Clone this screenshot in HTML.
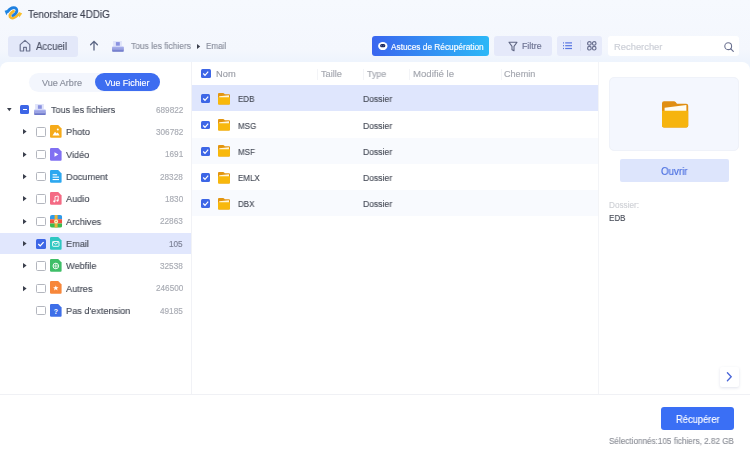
<!DOCTYPE html>
<html><head><meta charset="utf-8">
<style>
*{box-sizing:border-box;margin:0;padding:0}
html,body{width:750px;height:457px;overflow:hidden}
body{background:linear-gradient(180deg,#f6f9fe 0px,#f4f7fd 50px,#eef4fd 61px);font-family:"Liberation Sans",sans-serif;color:#333;position:relative}
.abs{position:absolute}
.t{position:absolute;white-space:nowrap;line-height:1;-webkit-text-stroke:0.15px currentColor;will-change:transform}
svg{position:absolute;overflow:visible}
</style></head><body>
<svg style="left:0px;top:0px" width="26" height="24" viewBox="0 0 26 24">
  <path d="M13.6 11.2 C11.8 12.4 10 13.6 9.8 15.6 C9.7 17.6 11.6 18.4 13.4 18 C15.4 17.5 17 16 18.6 14.4" stroke="#f7b82a" stroke-width="2.7" fill="none" stroke-linecap="round"/>
  <path d="M18.6 11.8 L22.2 13.6 L19.2 17.4 Z" fill="#f9bf2c"/>
  <path d="M7.6 11.6 C9.2 9.4 11.4 7.8 13.6 7.7 C15.8 7.6 17 8.8 16.9 10.6 C16.8 12.6 14.8 14.4 12.8 15.6" stroke="#1f80e0" stroke-width="2.7" fill="none" stroke-linecap="round"/>
  <path d="M4.6 10.8 L9.6 9.4 L6.4 15.2 Z" fill="#1f86e2"/>
</svg>
<div class="t" style="left:27.60px;top:9.50px;font-size:10.4px;color:#3d4150;transform:scaleX(0.95);transform-origin:left top;">Tenorshare 4DDiG</div>
<div class="abs" style="left:8px;top:35.5px;width:70px;height:21px;background:#e3e8f9;border-radius:3px"></div>
<svg style="left:19px;top:39px" width="12" height="13" viewBox="0 0 12 13"><path d="M1.2 5.6 L6 1.4 L10.8 5.6 V11.4 Q10.8 12 10.2 12 H7.4 V8.4 H4.6 V12 H1.8 Q1.2 12 1.2 11.4 Z" fill="none" stroke="#6d7490" stroke-width="1.2" stroke-linejoin="round"/></svg>
<div class="t" style="left:36.00px;top:42.48px;font-size:10.3px;color:#4d5266;transform:scaleX(0.934);transform-origin:left top;">Accueil</div>
<svg style="left:89px;top:40px" width="10" height="11" viewBox="0 0 10 11"><path d="M5 10 V1.6 M1.6 4.8 L5 1.4 L8.4 4.8" fill="none" stroke="#5b6684" stroke-width="1.3" stroke-linecap="round"/></svg>
<svg style="left:111.6px;top:40.6px" width="12" height="11" viewBox="0 0 12 11">
<defs><linearGradient id="dg1" x1="0" y1="0" x2="0" y2="1"><stop offset="0" stop-color="#b3baf3"/><stop offset="1" stop-color="#6570c4"/></linearGradient></defs>
<rect x="1.1" y="0" width="8.8" height="5.2" fill="#e0e4fa"/>
<rect x="3.9" y="1.1" width="3.9" height="3.6" fill="#8a92e0"/>
<rect x="0.1" y="5.4" width="11.7" height="5.4" rx="0.8" fill="url(#dg1)"/>
<rect x="1" y="7.6" width="10" height="0.9" fill="#c9cff6" opacity="0.4"/>
</svg>
<div class="t" style="left:130.80px;top:42.13px;font-size:9.3px;color:#8a8f9d;transform:scaleX(0.906);transform-origin:left top;">Tous les fichiers</div>
<svg style="left:197px;top:43.7px" width="4" height="5" viewBox="0 0 4 5"><path d="M0 0 L3.2 2.5 L0 5 Z" fill="#3a3f4c"/></svg>
<div class="t" style="left:206.20px;top:42.13px;font-size:9.3px;color:#8a8f9d;transform:scaleX(0.87);transform-origin:left top;">Email</div>
<div class="abs" style="left:372px;top:35.5px;width:117px;height:20.5px;background:linear-gradient(90deg,#3a66ef 0%,#2cb8f7 100%);border-radius:3px"></div>
<svg style="left:377.7px;top:41.8px" width="10" height="9" viewBox="0 0 10 9"><ellipse cx="4.8" cy="4.05" rx="4.7" ry="4.05" fill="#fff"/><rect x="2.1" y="2.1" width="5.2" height="3.2" rx="1.5" fill="#1e2a5e"/><circle cx="3.6" cy="3.7" r="0.45" fill="#8fa0e0"/><circle cx="5.8" cy="3.7" r="0.45" fill="#8fa0e0"/></svg>
<div class="t" style="left:390.70px;top:42.57px;font-size:8.3px;color:#ffffff;">Astuces de Récupération</div>
<div class="abs" style="left:494px;top:35.5px;width:57.5px;height:20.7px;background:#e5e9fa;border-radius:3px"></div>
<svg style="left:507.5px;top:40.5px" width="10" height="11" viewBox="0 0 10 11"><path d="M1 1.2 H9 L6 5.4 V9.8 L4 8.8 V5.4 Z" fill="none" stroke="#5f6683" stroke-width="1.1" stroke-linejoin="round"/></svg>
<div class="t" style="left:522.00px;top:42.15px;font-size:8.8px;color:#6a7090;">Filtre</div>
<div class="abs" style="left:557px;top:35.7px;width:45px;height:20.5px;background:#e6eafa;border-radius:3px"></div>
<svg style="left:563px;top:42.2px" width="10" height="8" viewBox="0 0 10 8"><g fill="#5775e2"><rect x="0" y="0.3" width="1" height="1.2"/><rect x="2.2" y="0.3" width="6.8" height="1.2"/><rect x="0" y="3.1" width="1" height="1.2"/><rect x="2.2" y="3.1" width="6.8" height="1.2"/><rect x="0" y="5.9" width="1" height="1.2"/><rect x="2.2" y="5.9" width="6.8" height="1.2"/></g></svg>
<div class="abs" style="left:579.5px;top:40.2px;width:1px;height:11px;background:#d8ddf0;"></div>
<svg style="left:587px;top:41px" width="10" height="10" viewBox="0 0 10 10"><g fill="none" stroke="#6a7090" stroke-width="1.2"><circle cx="2.4" cy="2.4" r="1.8"/><circle cx="7.2" cy="2.4" r="1.8"/><circle cx="2.4" cy="7.2" r="1.8"/><circle cx="7.2" cy="7.2" r="1.8"/></g></svg>
<div class="abs" style="left:607.8px;top:36px;width:131.2px;height:20px;background:#ffffff;border-radius:3px"></div>
<div class="t" style="left:613.50px;top:41.84px;font-size:9.4px;color:#cbced6;">Rechercher</div>
<svg style="left:723.8px;top:41.5px" width="10" height="10" viewBox="0 0 10 10"><circle cx="4.2" cy="4.2" r="3.4" fill="none" stroke="#6b7190" stroke-width="1.1"/><path d="M6.8 6.8 L9.3 9.3" stroke="#6b7190" stroke-width="1.2" stroke-linecap="round"/></svg>
<div class="abs" style="left:0px;top:62px;width:750px;height:333px;background:#ffffff;border-radius:8px 8px 0 0"></div>
<div class="abs" style="left:191px;top:62px;width:1px;height:332px;background:#f1f2f6;"></div>
<div class="abs" style="left:597.5px;top:62px;width:1px;height:332px;background:#f3f4f7;"></div>
<div class="abs" style="left:0px;top:394px;width:750px;height:1px;background:#f0f1f5;"></div>
<div class="abs" style="left:28.5px;top:72.5px;width:131.5px;height:19px;background:#f3f6fd;border-radius:9.5px"></div>
<div class="abs" style="left:94.7px;top:72.8px;width:65.3px;height:18.4px;background:#3d6df0;border-radius:9.2px"></div>
<div class="t" style="left:41.60px;top:78.52px;font-size:9.07px;color:#8a8f9d;">Vue Arbre</div>
<div class="t" style="left:104.80px;top:78.70px;font-size:8.86px;color:#ffffff;">Vue Fichier</div>
<svg style="left:6.7px;top:107.60px" width="5" height="4" viewBox="0 0 5 4"><path d="M0 0 H4.6 L2.3 3.2 Z" fill="#3a3f4c"/></svg>
<div class="abs" style="left:20.3px;top:105.0px;width:9px;height:9px;background:#3d66e6;border-radius:1.5px"></div>
<div class="abs" style="left:22.6px;top:109.0px;width:4.4px;height:1.3px;background:#ffffff;"></div>
<svg style="left:34px;top:103.8px" width="12" height="11.5" viewBox="0 0 12 11.5">
<defs><linearGradient id="dg2" x1="0" y1="0" x2="0" y2="1"><stop offset="0" stop-color="#b3baf3"/><stop offset="1" stop-color="#6570c4"/></linearGradient></defs>
<rect x="1.1" y="0" width="8.8" height="5.4" fill="#e0e4fa"/>
<rect x="3.9" y="1.2" width="3.9" height="3.6" fill="#8a92e0"/>
<rect x="0.1" y="5.6" width="11.7" height="5.5" rx="0.8" fill="url(#dg2)"/>
<rect x="1" y="7.9" width="10" height="0.9" fill="#c9cff6" opacity="0.4"/>
</svg>
<div class="t" style="left:51.00px;top:104.87px;font-size:9.6px;color:#484d59;transform:scaleX(0.94);transform-origin:left top;">Tous les fichiers</div>
<div class="t" style="right:567.00px;top:106.66px;font-size:8.2px;color:#a9acb4;">689822</div>
<svg style="left:22.7px;top:129.32px" width="4" height="6" viewBox="0 0 4 6"><path d="M0 0 L3.6 2.6 L0 5.2 Z" fill="#3a3f4c"/></svg>
<div class="abs" style="left:36px;top:127.42px;width:9.5px;height:9.2px;background:transparent;border:1px solid #b3b6be;border-radius:1.5px"></div>
<svg style="left:50px;top:125.22px" width="12" height="13" viewBox="0 0 12 13">
<path d="M1.2 0 H8.2 L11.6 3.4 V11.7 Q11.6 12.7 10.6 12.7 H1.2 Q0 12.7 0 11.7 V1 Q0 0 1.2 0 Z" fill="#f6ab1a"/>

<path d="M2.5 10.5 L5 6.8 L6.6 8.6 L7.8 7.4 L9.6 10.5 Z" fill="#fff"/><circle cx="7.8" cy="4.6" r="1" fill="#fff"/></svg>
<div class="t" style="left:66.40px;top:127.39px;font-size:9.6px;color:#484d59;transform:scaleX(0.955);transform-origin:left top;">Photo</div>
<div class="t" style="right:567.00px;top:128.98px;font-size:8.2px;color:#a9acb4;">306782</div>
<svg style="left:22.7px;top:151.64px" width="4" height="6" viewBox="0 0 4 6"><path d="M0 0 L3.6 2.6 L0 5.2 Z" fill="#3a3f4c"/></svg>
<div class="abs" style="left:36px;top:149.74px;width:9.5px;height:9.2px;background:transparent;border:1px solid #b3b6be;border-radius:1.5px"></div>
<svg style="left:50px;top:147.54px" width="12" height="13" viewBox="0 0 12 13">
<path d="M1.2 0 H8.2 L11.6 3.4 V11.7 Q11.6 12.7 10.6 12.7 H1.2 Q0 12.7 0 11.7 V1 Q0 0 1.2 0 Z" fill="#8070f2"/>

<path d="M4.5 4.3 L8.3 6.5 L4.5 8.7 Z" fill="#fff"/></svg>
<div class="t" style="left:66.40px;top:149.71px;font-size:9.6px;color:#484d59;transform:scaleX(0.955);transform-origin:left top;">Vidéo</div>
<div class="t" style="right:567.00px;top:151.30px;font-size:8.2px;color:#a9acb4;">1691</div>
<svg style="left:22.7px;top:173.96px" width="4" height="6" viewBox="0 0 4 6"><path d="M0 0 L3.6 2.6 L0 5.2 Z" fill="#3a3f4c"/></svg>
<div class="abs" style="left:36px;top:172.06px;width:9.5px;height:9.2px;background:transparent;border:1px solid #b3b6be;border-radius:1.5px"></div>
<svg style="left:50px;top:169.86px" width="12" height="13" viewBox="0 0 12 13">
<path d="M1.2 0 H8.2 L11.6 3.4 V11.7 Q11.6 12.7 10.6 12.7 H1.2 Q0 12.7 0 11.7 V1 Q0 0 1.2 0 Z" fill="#2da8f0"/>

<rect x="2.6" y="4.2" width="4.5" height="1.1" fill="#fff"/><rect x="2.6" y="6.6" width="6.4" height="1.1" fill="#fff"/><rect x="2.6" y="9" width="6.4" height="1.1" fill="#fff"/></svg>
<div class="t" style="left:66.40px;top:172.03px;font-size:9.6px;color:#484d59;transform:scaleX(0.955);transform-origin:left top;">Document</div>
<div class="t" style="right:567.00px;top:173.62px;font-size:8.2px;color:#a9acb4;">28328</div>
<svg style="left:22.7px;top:196.28px" width="4" height="6" viewBox="0 0 4 6"><path d="M0 0 L3.6 2.6 L0 5.2 Z" fill="#3a3f4c"/></svg>
<div class="abs" style="left:36px;top:194.38px;width:9.5px;height:9.2px;background:transparent;border:1px solid #b3b6be;border-radius:1.5px"></div>
<svg style="left:50px;top:192.18px" width="12" height="13" viewBox="0 0 12 13">
<path d="M1.2 0 H8.2 L11.6 3.4 V11.7 Q11.6 12.7 10.6 12.7 H1.2 Q0 12.7 0 11.7 V1 Q0 0 1.2 0 Z" fill="#f46a84"/>

<path d="M5 9.2 V4.6 L8.2 4 V8.4" fill="none" stroke="#fff" stroke-width="0.9"/><circle cx="4.3" cy="9.3" r="1.1" fill="#fff"/><circle cx="7.5" cy="8.6" r="1.1" fill="#fff"/></svg>
<div class="t" style="left:66.40px;top:194.35px;font-size:9.6px;color:#484d59;transform:scaleX(0.955);transform-origin:left top;">Audio</div>
<div class="t" style="right:567.00px;top:195.94px;font-size:8.2px;color:#a9acb4;">1830</div>
<svg style="left:22.7px;top:218.60px" width="4" height="6" viewBox="0 0 4 6"><path d="M0 0 L3.6 2.6 L0 5.2 Z" fill="#3a3f4c"/></svg>
<div class="abs" style="left:36px;top:216.7px;width:9.5px;height:9.2px;background:transparent;border:1px solid #b3b6be;border-radius:1.5px"></div>
<svg style="left:49.8px;top:215.00px" width="12.2" height="12.7" viewBox="0 0 12.2 12.7">
<defs><clipPath id="ac"><rect x="0" y="0" width="12.2" height="12.7" rx="2"/></clipPath></defs>
<g clip-path="url(#ac)"><rect x="0" y="0" width="12.2" height="4.3" fill="#2f9ae8"/><rect x="0" y="4.3" width="12.2" height="4.2" fill="#f0533f"/><rect x="0" y="8.5" width="12.2" height="4.2" fill="#3dba4e"/><rect x="4.6" y="0" width="3" height="12.7" fill="#e9b53a"/></g>
<circle cx="6.1" cy="6.4" r="2" fill="#fbeec4"/><circle cx="6.1" cy="6.4" r="0.7" fill="#c9a040"/>
</svg>
<div class="t" style="left:66.40px;top:216.67px;font-size:9.6px;color:#484d59;transform:scaleX(0.955);transform-origin:left top;">Archives</div>
<div class="t" style="right:567.00px;top:218.26px;font-size:8.2px;color:#a9acb4;">22863</div>
<div class="abs" style="left:0px;top:232.7px;width:191px;height:21.7px;background:#e1e7fd;"></div>
<svg style="left:22.7px;top:240.92px" width="4" height="6" viewBox="0 0 4 6"><path d="M0 0 L3.6 2.6 L0 5.2 Z" fill="#3a3f4c"/></svg>
<div class="abs" style="left:36px;top:239.02px;width:9.5px;height:9.5px;background:#3d66e6;border-radius:1.5px"></div>
<svg style="left:36px;top:239.02px" width="10" height="10" viewBox="0 0 10 10"><path d="M2.3 5 L4.2 6.9 L7.6 3.1" fill="none" stroke="#fff" stroke-width="1.3"/></svg>
<svg style="left:50px;top:236.82px" width="12" height="13" viewBox="0 0 12 13">
<path d="M1.2 0 H8.2 L11.6 3.4 V11.7 Q11.6 12.7 10.6 12.7 H1.2 Q0 12.7 0 11.7 V1 Q0 0 1.2 0 Z" fill="#2fc7c1"/>

<rect x="2.6" y="4.5" width="6.4" height="4.8" rx="0.6" fill="none" stroke="#fff" stroke-width="0.9"/><path d="M2.8 5 L5.8 7.2 L8.8 5" fill="none" stroke="#fff" stroke-width="0.9"/></svg>
<div class="t" style="left:66.40px;top:238.99px;font-size:9.6px;color:#484d59;transform:scaleX(0.955);transform-origin:left top;">Email</div>
<div class="t" style="right:567.00px;top:240.58px;font-size:8.2px;color:#7d8296;">105</div>
<svg style="left:22.7px;top:263.24px" width="4" height="6" viewBox="0 0 4 6"><path d="M0 0 L3.6 2.6 L0 5.2 Z" fill="#3a3f4c"/></svg>
<div class="abs" style="left:36px;top:261.34px;width:9.5px;height:9.2px;background:transparent;border:1px solid #b3b6be;border-radius:1.5px"></div>
<svg style="left:50px;top:259.14px" width="12" height="13" viewBox="0 0 12 13">
<path d="M1.2 0 H8.2 L11.6 3.4 V11.7 Q11.6 12.7 10.6 12.7 H1.2 Q0 12.7 0 11.7 V1 Q0 0 1.2 0 Z" fill="#3fbe68"/>

<circle cx="5.8" cy="7" r="2.8" fill="none" stroke="#fff" stroke-width="0.9"/><path d="M3 7 H8.6 M5.8 4.2 V9.8" stroke="#fff" stroke-width="0.7"/></svg>
<div class="t" style="left:66.40px;top:261.31px;font-size:9.6px;color:#484d59;transform:scaleX(0.955);transform-origin:left top;">Webfile</div>
<div class="t" style="right:567.00px;top:262.90px;font-size:8.2px;color:#a9acb4;">32538</div>
<svg style="left:22.7px;top:285.56px" width="4" height="6" viewBox="0 0 4 6"><path d="M0 0 L3.6 2.6 L0 5.2 Z" fill="#3a3f4c"/></svg>
<div class="abs" style="left:36px;top:283.66px;width:9.5px;height:9.2px;background:transparent;border:1px solid #b3b6be;border-radius:1.5px"></div>
<svg style="left:50px;top:281.46px" width="12" height="13" viewBox="0 0 12 13">
<path d="M1.2 0 H8.2 L11.6 3.4 V11.7 Q11.6 12.7 10.6 12.7 H1.2 Q0 12.7 0 11.7 V1 Q0 0 1.2 0 Z" fill="#f7873a"/>

<path d="M5.8 4.4 L6.6 6.2 L8.5 6.3 L7 7.5 L7.5 9.4 L5.8 8.3 L4.1 9.4 L4.6 7.5 L3.1 6.3 L5 6.2 Z" fill="#fff"/></svg>
<div class="t" style="left:66.40px;top:283.63px;font-size:9.6px;color:#484d59;transform:scaleX(0.955);transform-origin:left top;">Autres</div>
<div class="t" style="right:567.00px;top:285.22px;font-size:8.2px;color:#a9acb4;">246500</div>
<div class="abs" style="left:36px;top:305.98px;width:9.5px;height:9.2px;background:transparent;border:1px solid #b3b6be;border-radius:1.5px"></div>
<svg style="left:50px;top:303.78px" width="12" height="13" viewBox="0 0 12 13">
<path d="M1.2 0 H8.2 L11.6 3.4 V11.7 Q11.6 12.7 10.6 12.7 H1.2 Q0 12.7 0 11.7 V1 Q0 0 1.2 0 Z" fill="#3e6fe8"/>

<text x="5.8" y="9.6" font-size="7" font-weight="bold" fill="#fff" text-anchor="middle" font-family="Liberation Sans">?</text></svg>
<div class="t" style="left:66.40px;top:305.95px;font-size:9.6px;color:#484d59;transform:scaleX(0.955);transform-origin:left top;">Pas d'extension</div>
<div class="t" style="right:567.00px;top:307.54px;font-size:8.2px;color:#a9acb4;">49185</div>
<div class="abs" style="left:201.3px;top:69.1px;width:9.3px;height:8.8px;background:#3d66e6;border-radius:1.5px"></div>
<svg style="left:201.3px;top:69.1px" width="9.3" height="8.8" viewBox="0 0 9.3 8.8"><path d="M2.2 4.5 L4 6.3 L7.2 2.7" fill="none" stroke="#fff" stroke-width="1.2"/></svg>
<div class="t" style="left:216.30px;top:69.73px;font-size:9.3px;color:#9a9da6;">Nom</div>
<div class="abs" style="left:317px;top:68.5px;width:1px;height:11px;background:#f3f4f7;"></div>
<div class="abs" style="left:363px;top:68.5px;width:1px;height:11px;background:#f3f4f7;"></div>
<div class="abs" style="left:409px;top:68.5px;width:1px;height:11px;background:#f3f4f7;"></div>
<div class="abs" style="left:500.5px;top:68.5px;width:1px;height:11px;background:#f3f4f7;"></div>
<div class="t" style="left:320.90px;top:69.81px;font-size:9.2px;color:#a4a7af;">Taille</div>
<div class="t" style="left:367.20px;top:69.73px;font-size:9.3px;color:#a4a7af;transform:scaleX(0.955);transform-origin:left top;">Type</div>
<div class="t" style="left:412.60px;top:69.47px;font-size:9.6px;color:#a4a7af;">Modifié le</div>
<div class="t" style="left:504.30px;top:69.90px;font-size:9.1px;color:#a4a7af;">Chemin</div>
<div class="abs" style="left:192px;top:85.2px;width:405.5px;height:26.3px;background:#dfe6fd;"></div>
<div class="abs" style="left:201px;top:94.3px;width:9.3px;height:8.8px;background:#3d66e6;border-radius:1.5px"></div>
<svg style="left:201px;top:94.3px" width="9.3" height="8.8" viewBox="0 0 9.3 8.8"><path d="M2.2 4.5 L4 6.3 L7.2 2.7" fill="none" stroke="#fff" stroke-width="1.2"/></svg>
<svg style="left:218px;top:92.8px" width="12" height="11.6" viewBox="0 0 12 11.6">
<path d="M0 1.1 Q0 0 1 0 H5.2 Q5.8 0 6.1 0.4 L6.8 1.3 H11 Q12 1.3 12 2.3 V10.6 Q12 11.6 11 11.6 H1 Q0 11.6 0 10.6 Z" fill="#e3950f"/>
<path d="M1.2 3.2 L11 2.2 V5 H1.2 Z" fill="#fff6dc"/>
<path d="M0 4.3 H12 V10.6 Q12 11.6 11 11.6 H1 Q0 11.6 0 10.6 Z" fill="#f8b80c"/>
</svg>
<div class="t" style="left:237.70px;top:95.45px;font-size:8.8px;color:#484d59;transform:scaleX(0.91);transform-origin:left top;">EDB</div>
<div class="t" style="left:362.50px;top:95.44px;font-size:9.05px;color:#484d59;transform:scaleX(0.95);transform-origin:left top;">Dossier</div>
<div class="abs" style="left:201px;top:120.55px;width:9.3px;height:8.8px;background:#3d66e6;border-radius:1.5px"></div>
<svg style="left:201px;top:120.55px" width="9.3" height="8.8" viewBox="0 0 9.3 8.8"><path d="M2.2 4.5 L4 6.3 L7.2 2.7" fill="none" stroke="#fff" stroke-width="1.2"/></svg>
<svg style="left:218px;top:119.05px" width="12" height="11.6" viewBox="0 0 12 11.6">
<path d="M0 1.1 Q0 0 1 0 H5.2 Q5.8 0 6.1 0.4 L6.8 1.3 H11 Q12 1.3 12 2.3 V10.6 Q12 11.6 11 11.6 H1 Q0 11.6 0 10.6 Z" fill="#e3950f"/>
<path d="M1.2 3.2 L11 2.2 V5 H1.2 Z" fill="#fff6dc"/>
<path d="M0 4.3 H12 V10.6 Q12 11.6 11 11.6 H1 Q0 11.6 0 10.6 Z" fill="#f8b80c"/>
</svg>
<div class="t" style="left:237.70px;top:121.70px;font-size:8.8px;color:#484d59;transform:scaleX(0.91);transform-origin:left top;">MSG</div>
<div class="t" style="left:362.50px;top:121.69px;font-size:9.05px;color:#484d59;transform:scaleX(0.95);transform-origin:left top;">Dossier</div>
<div class="abs" style="left:192px;top:137.5px;width:405.5px;height:26.25px;background:#f8fafe;"></div>
<div class="abs" style="left:201px;top:146.8px;width:9.3px;height:8.8px;background:#3d66e6;border-radius:1.5px"></div>
<svg style="left:201px;top:146.8px" width="9.3" height="8.8" viewBox="0 0 9.3 8.8"><path d="M2.2 4.5 L4 6.3 L7.2 2.7" fill="none" stroke="#fff" stroke-width="1.2"/></svg>
<svg style="left:218px;top:145.3px" width="12" height="11.6" viewBox="0 0 12 11.6">
<path d="M0 1.1 Q0 0 1 0 H5.2 Q5.8 0 6.1 0.4 L6.8 1.3 H11 Q12 1.3 12 2.3 V10.6 Q12 11.6 11 11.6 H1 Q0 11.6 0 10.6 Z" fill="#e3950f"/>
<path d="M1.2 3.2 L11 2.2 V5 H1.2 Z" fill="#fff6dc"/>
<path d="M0 4.3 H12 V10.6 Q12 11.6 11 11.6 H1 Q0 11.6 0 10.6 Z" fill="#f8b80c"/>
</svg>
<div class="t" style="left:237.70px;top:147.95px;font-size:8.8px;color:#484d59;transform:scaleX(0.91);transform-origin:left top;">MSF</div>
<div class="t" style="left:362.50px;top:147.94px;font-size:9.05px;color:#484d59;transform:scaleX(0.95);transform-origin:left top;">Dossier</div>
<div class="abs" style="left:201px;top:173.05px;width:9.3px;height:8.8px;background:#3d66e6;border-radius:1.5px"></div>
<svg style="left:201px;top:173.05px" width="9.3" height="8.8" viewBox="0 0 9.3 8.8"><path d="M2.2 4.5 L4 6.3 L7.2 2.7" fill="none" stroke="#fff" stroke-width="1.2"/></svg>
<svg style="left:218px;top:171.55px" width="12" height="11.6" viewBox="0 0 12 11.6">
<path d="M0 1.1 Q0 0 1 0 H5.2 Q5.8 0 6.1 0.4 L6.8 1.3 H11 Q12 1.3 12 2.3 V10.6 Q12 11.6 11 11.6 H1 Q0 11.6 0 10.6 Z" fill="#e3950f"/>
<path d="M1.2 3.2 L11 2.2 V5 H1.2 Z" fill="#fff6dc"/>
<path d="M0 4.3 H12 V10.6 Q12 11.6 11 11.6 H1 Q0 11.6 0 10.6 Z" fill="#f8b80c"/>
</svg>
<div class="t" style="left:237.70px;top:174.20px;font-size:8.8px;color:#484d59;transform:scaleX(0.91);transform-origin:left top;">EMLX</div>
<div class="t" style="left:362.50px;top:174.19px;font-size:9.05px;color:#484d59;transform:scaleX(0.95);transform-origin:left top;">Dossier</div>
<div class="abs" style="left:192px;top:190.0px;width:405.5px;height:26.25px;background:#f8fafe;"></div>
<div class="abs" style="left:201px;top:199.3px;width:9.3px;height:8.8px;background:#3d66e6;border-radius:1.5px"></div>
<svg style="left:201px;top:199.3px" width="9.3" height="8.8" viewBox="0 0 9.3 8.8"><path d="M2.2 4.5 L4 6.3 L7.2 2.7" fill="none" stroke="#fff" stroke-width="1.2"/></svg>
<svg style="left:218px;top:197.8px" width="12" height="11.6" viewBox="0 0 12 11.6">
<path d="M0 1.1 Q0 0 1 0 H5.2 Q5.8 0 6.1 0.4 L6.8 1.3 H11 Q12 1.3 12 2.3 V10.6 Q12 11.6 11 11.6 H1 Q0 11.6 0 10.6 Z" fill="#e3950f"/>
<path d="M1.2 3.2 L11 2.2 V5 H1.2 Z" fill="#fff6dc"/>
<path d="M0 4.3 H12 V10.6 Q12 11.6 11 11.6 H1 Q0 11.6 0 10.6 Z" fill="#f8b80c"/>
</svg>
<div class="t" style="left:237.70px;top:200.45px;font-size:8.8px;color:#484d59;transform:scaleX(0.91);transform-origin:left top;">DBX</div>
<div class="t" style="left:362.50px;top:200.44px;font-size:9.05px;color:#484d59;transform:scaleX(0.95);transform-origin:left top;">Dossier</div>
<div class="abs" style="left:608.7px;top:77.3px;width:130.8px;height:73.3px;background:#f4f7fe;border-radius:5px;border:1px solid #eff2f9"></div>
<svg style="left:662px;top:101.4px" width="27" height="27" viewBox="0 0 27 27">
<path d="M0 2.2 Q0 0.2 2 0.2 H12 Q13 0.2 13.6 1 L15 2.8 H24.2 Q26.2 2.8 26.2 4.8 V24.4 Q26.2 26.4 24.2 26.4 H2 Q0 26.4 0 24.4 Z" fill="#e08e12"/>
<path d="M2.6 6.8 L24.4 4.1 V11 H2.6 Z" fill="#fffcf2"/>
<path d="M0 9.8 H26.2 V24.4 Q26.2 26.4 24.2 26.4 H2 Q0 26.4 0 24.4 Z" fill="#f6b40e"/>
</svg>
<div class="abs" style="left:619.6px;top:159px;width:109.4px;height:23px;background:#dde5fc;border-radius:2px"></div>
<div class="t" style="left:661.40px;top:166.50px;font-size:10.4px;color:#4a6fe0;transform:scaleX(0.94);transform-origin:left top;">Ouvrir</div>
<div class="t" style="left:609.00px;top:201.56px;font-size:8.2px;color:#cfd1d6;">Dossier:</div>
<div class="t" style="left:609.00px;top:213.07px;font-size:9.6px;color:#484d59;transform:scaleX(0.83);transform-origin:left top;">EDB</div>
<div class="abs" style="left:719.8px;top:366.8px;width:19.7px;height:20.5px;background:#ffffff;border-radius:2px;box-shadow:0 1px 3px rgba(40,60,120,0.14)"></div>
<svg style="left:726.2px;top:372.3px" width="6" height="10" viewBox="0 0 6 10"><path d="M1.4 0.7 L5.2 4.7 L1.4 8.7" fill="none" stroke="#4a66d8" stroke-width="1.35" stroke-linecap="round"/></svg>
<div class="abs" style="left:0px;top:395px;width:750px;height:62px;background:#ffffff;"></div>
<div class="abs" style="left:661px;top:407.2px;width:73px;height:22.9px;background:#3a6ff5;border-radius:3px"></div>
<div class="t" style="left:675.80px;top:414.85px;font-size:10.1px;color:#ffffff;transform:scaleX(0.925);transform-origin:left top;">Récupérer</div>
<div class="t" style="right:16.00px;top:437.15px;font-size:8.8px;color:#8e9199;transform:scaleX(0.926);transform-origin:right top;">Sélectionnés:105 fichiers, 2.82 GB</div>
</body></html>
